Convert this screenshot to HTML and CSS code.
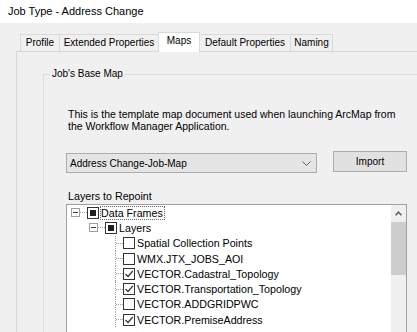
FILE: index.html
```html
<!DOCTYPE html>
<html>
<head>
<meta charset="utf-8">
<link rel="stylesheet" href="styles.css">
</head>
<body>
<div class="titlebar">Job Type - Address Change</div>
<div class="tabstrip">
  <div class="tab w-profile">Profile</div>
  <div class="tab w-ext">Extended Properties</div>
  <div class="tab active w-maps">Maps</div>
  <div class="tab w-def">Default Properties</div>
  <div class="tab last w-naming">Naming</div>
</div>
<div class="panel">
  <fieldset class="group">
    <legend>Job's Base Map</legend>
    <div class="group-body">
      <p class="desc">This is the template map document used when launching ArcMap from<br>the Workflow Manager Application.</p>
      <div class="map-row">
        <div class="combo">
          <span>Address Change-Job-Map</span>
          <svg class="chev" width="9" height="5" viewBox="0 0 9 5"><path d="M0.5 0.5 L4.5 4.5 L8.5 0.5" fill="none" stroke="#606060" stroke-width="1"/></svg>
        </div>
        <div class="button">Import</div>
      </div>
      <div class="layers-label">Layers to Repoint</div>
      <div class="tree">
        <div class="rows">
          <div class="row l0">
            <div class="branch"><div class="expander"><span class="minus"></span></div><div class="hline"></div></div>
            <div class="cb partial"><span class="fill"></span></div>
            <div class="label focus">Data Frames</div>
          </div>
          <div class="row l1">
            <div class="branch"><div class="expander"><span class="minus"></span></div><div class="hline"></div></div>
            <div class="cb partial"><span class="fill"></span></div>
            <div class="label">Layers</div>
          </div>
          <div class="row l2">
            <div class="branch leaf"><div class="stub"></div><div class="tee"><div class="hline"></div></div></div>
            <div class="cb"></div>
            <div class="label">Spatial Collection Points</div>
          </div>
          <div class="row l2">
            <div class="branch leaf"><div class="stub"></div><div class="tee"><div class="hline"></div></div></div>
            <div class="cb"></div>
            <div class="label">WMX.JTX_JOBS_AOI</div>
          </div>
          <div class="row l2">
            <div class="branch leaf"><div class="stub"></div><div class="tee"><div class="hline"></div></div></div>
            <div class="cb"><svg width="10" height="10" viewBox="0 0 10 10"><path d="M1.5 5 L4 7.5 L8.8 2" fill="none" stroke="#333" stroke-width="1.2"/></svg></div>
            <div class="label">VECTOR.Cadastral_Topology</div>
          </div>
          <div class="row l2">
            <div class="branch leaf"><div class="stub"></div><div class="tee"><div class="hline"></div></div></div>
            <div class="cb"><svg width="10" height="10" viewBox="0 0 10 10"><path d="M1.5 5 L4 7.5 L8.8 2" fill="none" stroke="#333" stroke-width="1.2"/></svg></div>
            <div class="label">VECTOR.Transportation_Topology</div>
          </div>
          <div class="row l2">
            <div class="branch leaf"><div class="stub"></div><div class="tee"><div class="hline"></div></div></div>
            <div class="cb"></div>
            <div class="label">VECTOR.ADDGRIDPWC</div>
          </div>
          <div class="row l2">
            <div class="branch leaf"><div class="stub"></div><div class="tee"><div class="hline"></div></div></div>
            <div class="cb"><svg width="10" height="10" viewBox="0 0 10 10"><path d="M1.5 5 L4 7.5 L8.8 2" fill="none" stroke="#333" stroke-width="1.2"/></svg></div>
            <div class="label">VECTOR.PremiseAddress</div>
          </div>
        </div>
        <div class="scrollbar">
          <div class="sb-arrow"><svg width="7" height="5" viewBox="0 0 7 5"><path d="M0.6 4.2 L3.5 1.2 L6.4 4.2" fill="none" stroke="#606060" stroke-width="1.5"/></svg></div>
          <div class="sb-thumb"></div>
        </div>
      </div>
    </div>
  </fieldset>
</div>
</body>
</html>
```
FILE: styles.css
```css
html, body {
  margin: 0;
  padding: 0;
  overflow: hidden;
}
body {
  width: 417px;
  height: 332px;
  background: #f0f0f0;
  font-family: "Liberation Sans", Arial, sans-serif;
  color: #000;
}
.titlebar {
  height: 23px;
  line-height: 23px;
  padding-left: 8px;
  background: #fff;
  font-size: 11px;
}
.tabstrip {
  display: flex;
  align-items: flex-end;
  height: 19px;
  margin-top: 9px;
  padding-left: 20px;
  position: relative;
  z-index: 1;
}
.tab {
  box-sizing: border-box;
  height: 17px;
  border: 1px solid #d9d9d9;
  border-bottom: none;
  border-right: none;
  background: #f0f0f0;
  font-size: 10px;
  line-height: 16px;
  text-align: center;
  white-space: nowrap;
}
.tab.last { border-right: 1px solid #d9d9d9; }
.tab.active {
  height: 20px;
  margin-bottom: -1px;
  background: #fff;
  border-right: 1px solid #d9d9d9;
}
.tab.active + .tab { border-left: none; }
.w-profile { width: 39px; }
.w-ext { width: 99px; }
.w-maps { width: 42px; }
.w-def { width: 90px; }
.w-naming { width: 43px; }
.panel {
  margin-left: 16px;
  border-top: 1px solid #d9d9d9;
  border-left: 1px solid #d9d9d9;
  padding-top: 16px;
  height: 264px;
  background: #f0f0f0;
}
.group {
  box-sizing: border-box;
  margin: 0 0 0 26px;
  padding: 0;
  width: 374px;
  border: 1px solid #dcdcdc;
  border-right: none;
  border-bottom: none;
  min-width: 0;
}
.group legend {
  font-size: 10px;
  line-height: 12px;
  padding: 0 2px;
  margin-left: 6px;
}
.group-body {
  padding: 29px 0 0 22px;
}
.desc {
  margin: 0 0 0 2px;
  font-size: 10.5px;
  line-height: 11.5px;
  white-space: nowrap;
}
.map-row {
  display: flex;
  align-items: flex-start;
  gap: 16px;
  margin-top: 19px;
}
.combo {
  box-sizing: border-box;
  width: 251px;
  height: 20px;
  flex: none;
  margin-top: 2px;
  border: 1px solid #acacac;
  background: #e5e5e5;
  display: flex;
  align-items: center;
  justify-content: space-between;
  padding: 0 5px 0 3px;
  font-size: 10px;
}
.chev { display: block; }
.button {
  box-sizing: border-box;
  width: 74px;
  height: 21px;
  flex: none;
  border: 1px solid #adadad;
  background: #e1e1e1;
  font-size: 10px;
  line-height: 19px;
  text-align: center;
}
.layers-label {
  margin: 17px 0 0 2px;
  font-size: 10.7px;
  line-height: 12px;
}
.tree {
  box-sizing: border-box;
  width: 341px;
  height: 128px;
  margin-top: 2px;
  border: 1px solid #a0a0a0;
  border-bottom: none;
  background: #fff;
  display: flex;
}
.rows {
  flex: 1;
  overflow: hidden;
}
.row {
  display: flex;
  align-items: center;
  height: 15.3px;
  font-size: 10.7px;
  white-space: nowrap;
}
.l0 { padding-left: 4px; }
.l1 { padding-left: 22px; }
.l2 { padding-left: 40px; }
.branch {
  width: 16px;
  height: 100%;
  flex: none;
  display: flex;
  align-items: center;
}
.expander {
  box-sizing: border-box;
  width: 9px;
  height: 9px;
  border: 1px solid #a0a0a0;
  background: #fff;
  display: flex;
  align-items: center;
  justify-content: center;
  flex: none;
}
.minus {
  width: 5px;
  height: 1px;
  background: #444;
}
.hline {
  flex: 1;
  height: 0;
  border-top: 1px dotted #a0a0a0;
}
.branch.leaf { align-items: stretch; }
.stub { width: 8px; flex: none; }
.tee {
  flex: 1;
  border-left: 1px dotted #a0a0a0;
  display: flex;
  align-items: center;
}
.cb {
  box-sizing: border-box;
  width: 12px;
  height: 12px;
  border: 1px solid #333;
  background: #fff;
  flex: none;
  display: flex;
  align-items: center;
  justify-content: center;
}
.cb svg { display: block; }
.fill {
  width: 6px;
  height: 6px;
  background: #1f1f1f;
}
.label {
  margin-left: 1px;
  padding: 0 1px 0 0;
  border: 1px solid transparent;
  line-height: 12px;
}
.label.focus { border: 1px dotted #666; }
.scrollbar {
  width: 15px;
  flex: none;
  background: #f0f0f0;
  display: flex;
  flex-direction: column;
}
.sb-arrow {
  height: 17px;
  display: flex;
  align-items: center;
  justify-content: center;
}
.sb-arrow svg { display: block; }
.sb-thumb {
  height: 53px;
  background: #cdcdcd;
}
```
